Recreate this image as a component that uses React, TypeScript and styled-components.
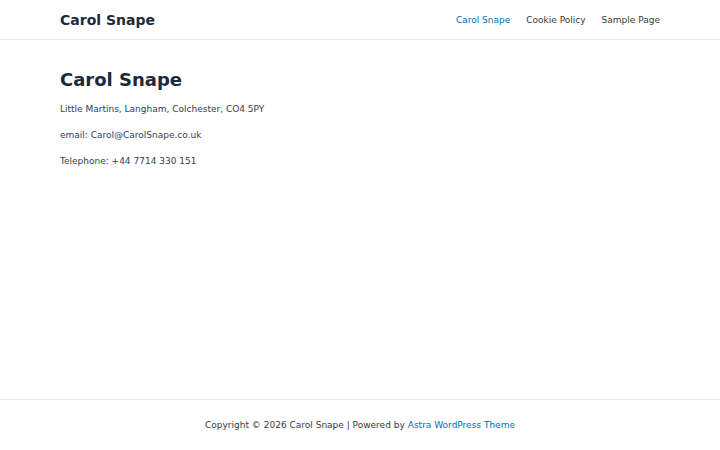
import React from 'react';
import styled, { createGlobalStyle } from 'styled-components';

const Global = createGlobalStyle`
  html, body { margin: 0; padding: 0; background: #fff; }
  body { font-family: "DejaVu Sans", sans-serif; color: #334155; }
`;

const Page = styled.div`
  display: flex;
  flex-direction: column;
  height: 450px;
`;

const Header = styled.header`
  height: 40px;
  border-bottom: 1px solid #e5e7eb;
  display: flex;
  align-items: center;
  justify-content: space-between;
  padding: 0 60px;
  box-sizing: border-box;
`;

const SiteTitle = styled.div`
  font-size: 14px;
  font-weight: bold;
  color: #1e293b;
`;

const Nav = styled.nav`
  display: flex;
  gap: 16px;
`;

const NavLink = styled.a<{ $active?: boolean }>`
  font-size: 9px;
  color: ${(p) => (p.$active ? '#0170b9' : '#3a3a3a')};
  text-decoration: none;
`;

const Main = styled.main`
  flex: 1;
  padding: 29px 60px 0;
`;

const Title = styled.h1`
  font-size: 18px;
  font-weight: bold;
  color: #1e293b;
  margin: 0 0 12px;
  line-height: 22px;
`;

const Para = styled.p`
  font-size: 9px;
  line-height: 13px;
  margin: 0 0 13px;
`;

const Footer = styled.footer`
  height: 50px;
  border-top: 1px solid #e5e7eb;
  display: flex;
  align-items: center;
  justify-content: center;
  font-size: 9px;
  color: #3a3a3a;
`;

const FooterLink = styled.a`
  color: #0170b9;
  text-decoration: none;
  margin-left: 3px;
`;

export default function App() {
  return (
    <Page>
      <Global />
      <Header>
        <SiteTitle>Carol Snape</SiteTitle>
        <Nav>
          <NavLink $active>Carol Snape</NavLink>
          <NavLink>Cookie Policy</NavLink>
          <NavLink>Sample Page</NavLink>
        </Nav>
      </Header>
      <Main>
        <Title>Carol Snape</Title>
        <Para>Little Martins, Langham, Colchester, CO4 5PY</Para>
        <Para>email: Carol@CarolSnape.co.uk</Para>
        <Para>Telephone: +44 7714 330 151</Para>
      </Main>
      <Footer>
        Copyright © 2026 Carol Snape | Powered by<FooterLink>Astra WordPress Theme</FooterLink>
      </Footer>
    </Page>
  );
}
